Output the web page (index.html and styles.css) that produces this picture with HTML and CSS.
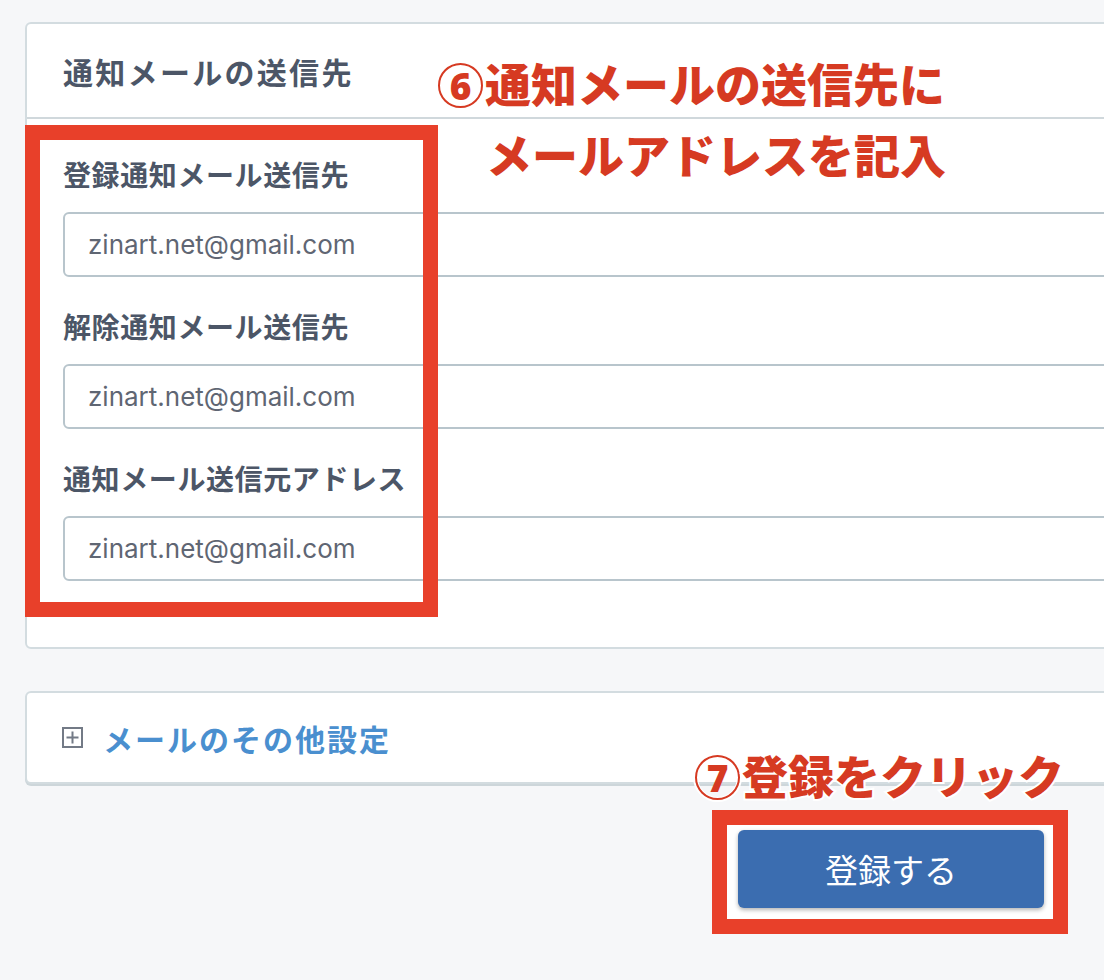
FILE: index.html
```html
<!DOCTYPE html>
<html lang="ja">
<head>
<meta charset="utf-8">
<title>通知メールの送信先</title>
<link rel="stylesheet" href="styles.css">
</head>
<body>
<div class="page">
  <section class="card notify">
    <div class="card-head"><h2 class="card-title">通知メールの送信先</h2></div>
    <div class="card-body">
      <div class="field">
        <label class="field-label">登録通知メール送信先</label>
        <input class="field-input" type="text" value="zinart.net@gmail.com" readonly>
      </div>
      <div class="field">
        <label class="field-label">解除通知メール送信先</label>
        <input class="field-input" type="text" value="zinart.net@gmail.com" readonly>
      </div>
      <div class="field">
        <label class="field-label">通知メール送信元アドレス</label>
        <input class="field-input" type="text" value="zinart.net@gmail.com" readonly>
      </div>
    </div>
  </section>

  <section class="card more">
    <svg class="expand-icon" width="21" height="21" viewBox="0 0 21 21" aria-hidden="true">
      <rect x="1" y="1" width="19" height="19" fill="none" stroke="#737a86" stroke-width="2"/>
      <path d="M10.5 4.5v12M4.5 10.5h12" stroke="#737a86" stroke-width="2" fill="none"/>
    </svg>
    <span class="more-title">メールのその他設定</span>
  </section>

  <div class="actions">
    <div class="btn-frame">
      <button class="btn-primary" type="button">登録する</button>
    </div>
  </div>

  <div class="hl hl-fields"></div>
  <p class="note note-1"><span class="num">6</span>通知メールの送信先に</p>
  <p class="note note-2">メールアドレスを記入</p>
  <p class="note note-3"><span class="num">7</span>登録をクリック</p>
</div>
</body>
</html>
```

FILE: styles.css
```css
html, body {
  margin: 0;
  padding: 0;
  overflow: hidden;
}

body {
  background: #f6f7f9;
  font-family: "Noto Sans CJK JP", "Noto Sans", sans-serif;
}

.page {
  position: relative;
  padding: 22px 0 0 25px;
  min-height: 958px;
  box-sizing: border-box;
}

.card {
  background: #fff;
  border: 2px solid #d3dce0;
  border-radius: 6px;
  margin-right: -40px;
}

.card-head {
  height: 93px;
  border-bottom: 2px solid #d0d8dc;
  display: flex;
  align-items: center;
  padding-left: 36px;
}

.card-title {
  margin: 0;
  font-size: 30px;
  font-weight: 700;
  color: #4c5667;
  letter-spacing: 2.3px;
  line-height: 1;
}

.card-body {
  display: flex;
  flex-direction: column;
  gap: 29px;
  padding: 35px 0 66px 36px;
}

.field-label {
  display: block;
  font-size: 28px;
  line-height: 40px;
  font-weight: 700;
  color: #4c5667;
  letter-spacing: 0.6px;
  margin-bottom: 18px;
}

.field-input {
  display: block;
  box-sizing: border-box;
  width: 100%;
  height: 65px;
  border: 2px solid #b8c5cc;
  border-radius: 6px;
  padding: 0 0 0 23px;
  font-family: "Inter", "Noto Sans", sans-serif;
  font-size: 26px;
  color: #5f6673;
  background: #fff;
  outline: none;
}

.more {
  margin-top: 42px;
  height: 89px;
  display: flex;
  align-items: center;
  padding-left: 35px;
  gap: 20px;
  box-shadow: 0 2px 0 #cdd6da;
}

.expand-icon {
  flex: none;
}

.more-title {
  font-size: 30px;
  font-weight: 700;
  color: #4a8fcf;
  letter-spacing: 2px;
  line-height: 1;
}

.actions {
  display: flex;
  justify-content: flex-end;
  margin-top: 26px;
  margin-right: 36px;
}

.btn-frame {
  border: 15px solid #e8402a;
  background: #fff;
  padding: 5px 9px 11px 11px;
}

.btn-primary {
  display: block;
  width: 306px;
  height: 78px;
  border: none;
  border-radius: 6px;
  background: #3b6db0;
  color: #fff;
  font-family: "Noto Sans CJK JP", sans-serif;
  font-size: 33px;
  font-weight: 400;
  box-shadow: 0 2px 4px rgba(0, 0, 0, 0.3);
  cursor: pointer;
}

/* annotation overlays */
.hl {
  position: absolute;
  box-sizing: border-box;
  border: 15px solid #e8402a;
}

.hl-fields {
  left: 25px;
  top: 125px;
  width: 413px;
  height: 492px;
}

.note {
  position: absolute;
  margin: 0;
  display: flex;
  align-items: center;
  font-size: 46px;
  line-height: 1;
  font-weight: 900;
  color: #d63a22;
  white-space: nowrap;
  -webkit-text-stroke: 4px #fff;
  paint-order: stroke fill;
}

.num {
  display: inline-flex;
  align-items: center;
  justify-content: center;
  box-sizing: border-box;
  flex: none;
  width: 45px;
  height: 45px;
  margin-top: 8px;
  margin-right: 2px;
  border: 2px solid #d63a22;
  border-radius: 50%;
  box-shadow: 0 0 0 2px #fff, inset 0 0 0 1px #fff;
  font-family: "Noto Sans", sans-serif;
  font-size: 37px;
  font-weight: 900;
  line-height: 1;
  -webkit-text-stroke: 0;
}

.note-1 {
  left: 438px;
  top: 55px;
}

.note-2 {
  left: 486px;
  top: 130px;
}

.note-3 {
  left: 695px;
  top: 747px;
}
```
